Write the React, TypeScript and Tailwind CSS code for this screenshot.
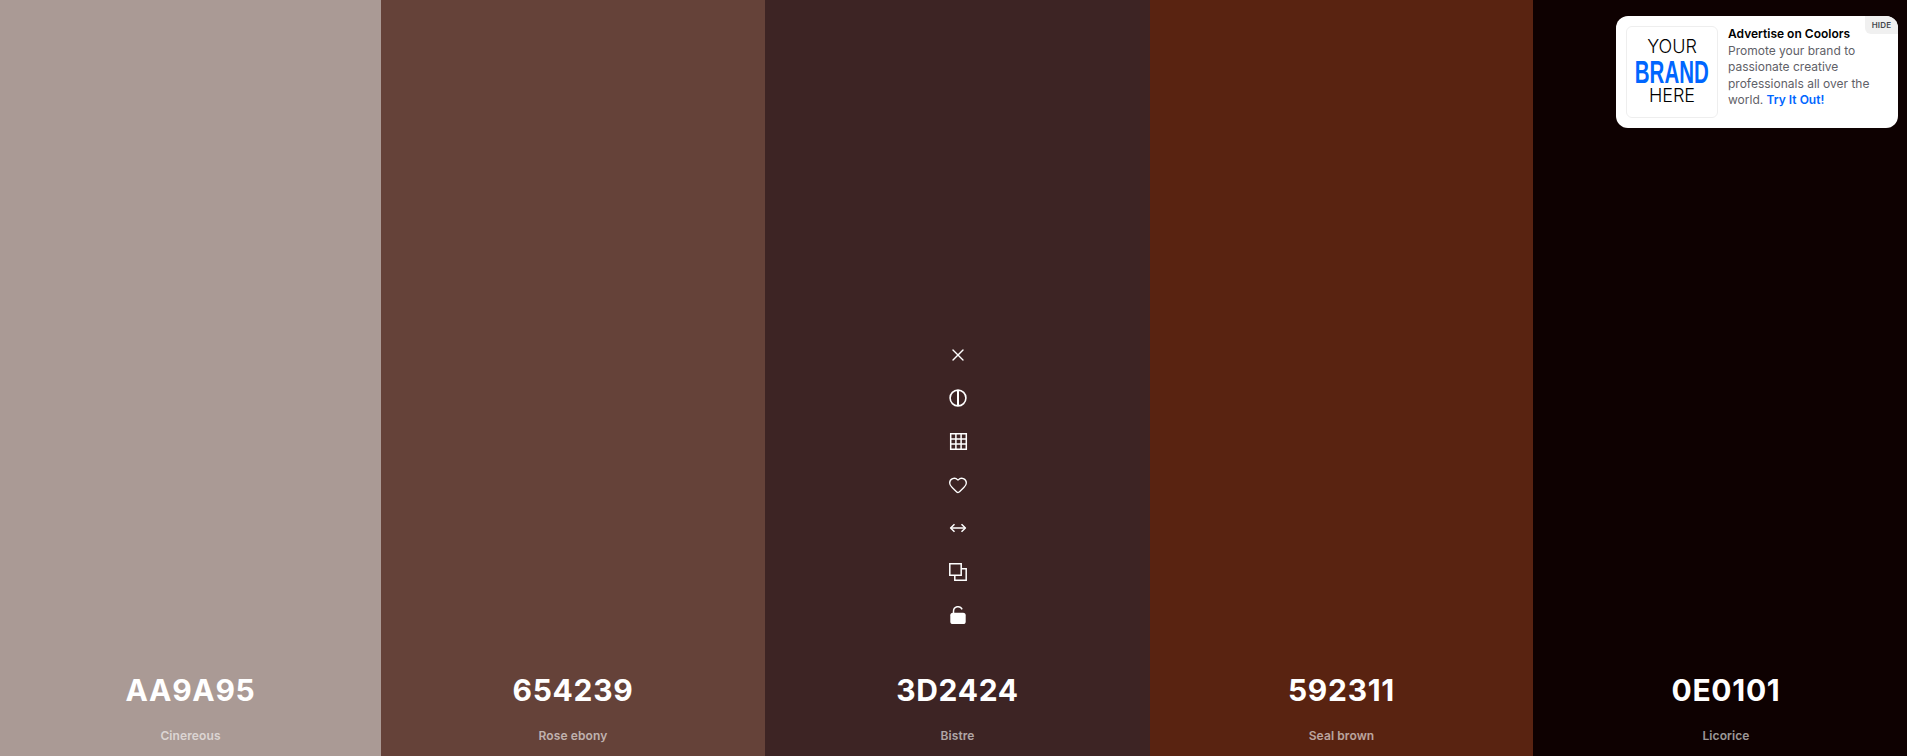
import { Heart, X } from 'lucide-react';

const colors = [
  { hex: 'AA9A95', name: 'Cinereous', bg: 'bg-[#aa9a95]' },
  { hex: '654239', name: 'Rose ebony', bg: 'bg-[#654239]' },
  { hex: '3D2424', name: 'Bistre', bg: 'bg-[#3d2424]', active: true },
  { hex: '592311', name: 'Seal brown', bg: 'bg-[#592311]' },
  { hex: '0E0101', name: 'Licorice', bg: 'bg-[#0e0101]' },
];

function ContrastIcon() {
  return (
    <svg width="20" height="20" viewBox="0 0 20 20" fill="none" stroke="currentColor" strokeWidth="1.6">
      <circle cx="10" cy="10" r="7.9" />
      <path d="M10 2v16" strokeWidth="2" />
    </svg>
  );
}

function ShadesIcon() {
  return (
    <svg width="20" height="20" viewBox="0 0 20 20" fill="none" stroke="currentColor" strokeWidth="1.5">
      <path d="M2.7 2.7h15.6v15.6H2.7zM2.7 7.9h15.6M2.7 13.1h15.6M7.9 2.7v15.6M13.1 2.7v15.6" />
    </svg>
  );
}

function DragIcon() {
  return (
    <svg width="20" height="20" viewBox="0 0 20 20" fill="none" stroke="currentColor" strokeWidth="1.5" strokeLinejoin="round">
      <path d="M3 10h14" />
      <path d="M6.5 6.2 2.6 10l3.9 3.8M13.5 6.2l3.9 3.8-3.9 3.8" />
    </svg>
  );
}

function CopyIcon() {
  return (
    <svg width="20" height="20" viewBox="0 0 20 20" fill="none" stroke="currentColor" strokeWidth="1.5">
      <path d="M1.8 1.8h11.4v11.4H1.8z" />
      <path d="M13.2 6.8h5v11.4H6.8v-5" />
    </svg>
  );
}

function UnlockIcon() {
  return (
    <svg width="20" height="20" viewBox="0 0 20 20" fill="none">
      <path d="M5.5 8.5V6.2a4.5 4.5 0 0 1 8.6-1.8" stroke="currentColor" strokeWidth="1.5" />
      <rect x="2.3" y="7.7" width="15.4" height="11.3" rx="2.6" fill="currentColor" />
    </svg>
  );
}

function ColumnTools() {
  return (
    <div className="flex flex-col items-center gap-[23.4px] text-white mb-[45px]">
      <X size={20} strokeWidth={1.6} />
      <ContrastIcon />
      <ShadesIcon />
      <Heart size={20} strokeWidth={1.6} />
      <DragIcon />
      <CopyIcon />
      <UnlockIcon />
    </div>
  );
}

function AdCard() {
  return (
    <div className="absolute top-4 right-[9px] w-[282px] h-[112px] bg-white rounded-xl p-2.5 flex gap-2.5 overflow-hidden">
      <div className="w-[92px] h-[92px] shrink-0 border border-[#eeeeee] rounded-md flex flex-col items-center justify-center text-black">
        <span className="text-[18px] leading-[24.5px] font-light">YOUR</span>
        <span className="text-[32px] leading-[24.5px] font-semibold text-[#0066ff] font-['Liberation_Sans',sans-serif] scale-x-[0.64] -mx-[24px]">BRAND</span>
        <span className="text-[18px] leading-[24.5px] font-light">HERE</span>
      </div>
      <div>
        <p className="text-[12px] leading-[16.5px] font-semibold text-black">Advertise on Coolors</p>
        <p className="text-[12px] leading-[16.5px] text-[#5f6168]">
          Promote your brand to passionate creative professionals all over the world.{' '}
          <span className="font-semibold text-[#0066ff]">Try It Out!</span>
        </p>
      </div>
      <div className="absolute top-0 right-0 w-[33px] h-[18px] bg-[#f0f0f0] rounded-bl-md flex items-center justify-center text-[8px] tracking-[0.2px] font-semibold text-[#44464d]">
        HIDE
      </div>
    </div>
  );
}

export default function App() {
  return (
    <div className="relative grid grid-cols-[381px_384px_385px_383px_386px] h-[756px] w-full overflow-hidden font-['Inter',sans-serif]">
      {colors.map((c) => (
        <div key={c.hex} className={`${c.bg} flex flex-col items-center justify-end pb-[12px]`}>
          {c.active && <ColumnTools />}
          <div className="text-[30px] leading-[40px] font-bold tracking-[0.7px] text-white">{c.hex}</div>
          <div className="mt-[18px] text-[12px] leading-[16px] font-semibold tracking-[0.1px] text-white/60">{c.name}</div>
        </div>
      ))}
      <AdCard />
    </div>
  );
}
